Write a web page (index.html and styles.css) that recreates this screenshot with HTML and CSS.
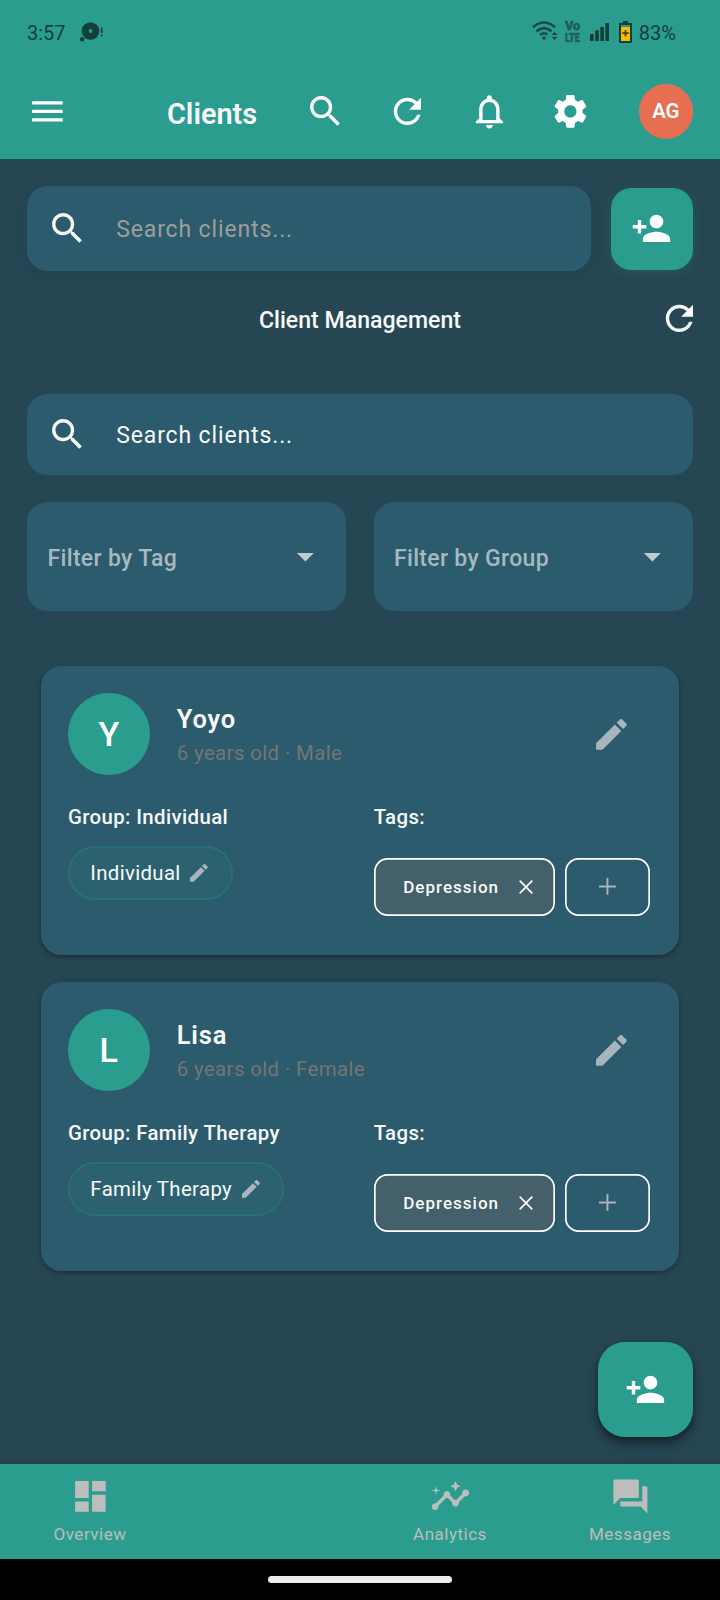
FILE: index.html
```html
<!DOCTYPE html>
<html lang="en">
<head>
<meta charset="utf-8">
<title>Clients</title>
<link rel="stylesheet" href="styles.css">
</head>
<body>
<svg class="defs" aria-hidden="true">
  <symbol id="search" viewBox="0 0 24 24"><path d="M15.5 14h-.79l-.28-.27C15.41 12.59 16 11.11 16 9.5 16 5.91 13.09 3 9.5 3S3 5.91 3 9.5 5.91 16 9.5 16c1.61 0 3.09-.59 4.23-1.57l.27.28v.79l5 4.99L20.49 19l-4.99-5zm-6 0C7.01 14 5 11.99 5 9.5S7.01 5 9.5 5 14 7.01 14 9.5 11.99 14 9.5 14z"/></symbol>
  <symbol id="refresh" viewBox="0 0 24 24"><path d="M17.65 6.35C16.2 4.9 14.21 4 12 4c-4.42 0-7.99 3.58-7.99 8s3.57 8 7.99 8c3.73 0 6.84-2.55 7.73-6h-2.08c-.82 2.33-3.04 4-5.65 4-3.31 0-6-2.69-6-6s2.69-6 6-6c1.66 0 3.14.69 4.22 1.78L13 11h7V4l-2.35 2.35z"/></symbol>
  <symbol id="person-add" viewBox="0 0 24 24"><path d="M15 12c2.21 0 4-1.79 4-4s-1.79-4-4-4-4 1.79-4 4 1.79 4 4 4zm-9-2V7H4v3H1v2h3v3h2v-3h3v-2H6zm9 4c-2.67 0-8 1.34-8 4v2h16v-2c0-2.66-5.33-4-8-4z"/></symbol>
  <symbol id="edit" viewBox="0 0 24 24"><path d="M3 17.25V21h3.75L17.81 9.94l-3.75-3.75L3 17.25zM20.71 7.04c.39-.39.39-1.02 0-1.41l-2.34-2.34c-.39-.39-1.02-.39-1.41 0l-1.83 1.83 3.75 3.75 1.83-1.83z"/></symbol>
  <symbol id="caret" viewBox="0 0 24 24"><path d="M7 10l5 5 5-5z"/></symbol>
  <symbol id="plus" viewBox="0 0 24 24"><path d="M19 12.800h-6.200v6.200h-1.600v-6.200H5v-1.600h6.200V5h1.600v6.200H19z"/></symbol>
</svg>
<div class="screen">
  <header class="header">
    <div class="status">
      <span class="time">3:57</span>
      <svg class="notif" viewBox="0 0 24 20"><circle cx="10.5" cy="9" r="8.8"/><circle cx="2.2" cy="17.2" r="2.2"/><circle class="dot" cx="10.5" cy="9" r="1.9"/><path d="M20.900 5.500h1.600v5.600h-1.600zM20.900 12.600h1.600v1.600h-1.600z"/></svg>
      <svg class="wifi" viewBox="0 0 26 20"><g fill="none" stroke="#174c47" stroke-width="2.600"><path d="M1 6.300Q12 -3.300 23 6.300"/><path d="M4.400 10.300Q12 3.900 19.600 10.300"/><path d="M8 14Q12 10.800 15.500 13.500"/></g><circle cx="12" cy="17" r="1.700"/><path d="M22.500 10.800l2.900 3.200h-5.800zM19.600 15.700h5.800l-2.900 3.200z"/></svg>
      <span class="volte"><span class="vo">Vo</span><span class="lte">LTE</span></span>
      <svg class="signal" viewBox="0 0 19 18"><rect y="11" width="3.600" height="7" rx=".6"/><rect x="5.200" y="7.200" width="3.600" height="10.800" rx=".6"/><rect x="10.300" y="4" width="3.600" height="14" rx=".6"/><rect x="15.400" y="0" width="3.600" height="18" rx=".6"/></svg>
      <svg class="battery" viewBox="0 0 13 22"><path d="M4 0h5v2h4v18.500q0 1.500-1.500 1.500h-10Q0 22 0 20.500V2h4z"/><path fill="#2a9d8f" d="M2 4h9v2H2z"/><path fill="#fbb900" d="M2 6h9v14H2z"/><path fill="#4d4712" d="M5.600 9h1.800v2.200h2.400v1.800H7.400v2.300H5.600V13H3.200v-1.800h2.400z"/></svg>
      <span class="percent">83%</span>
    </div>
    <div class="appbar">
      <button class="icon-btn"><svg class="icon" viewBox="0 0 24 24"><path d="M3 18h18v-2H3v2zm0-5h18v-2H3v2zm0-7v2h18V6H3z"/></svg></button>
      <h1 class="title">Clients</h1>
      <button class="icon-btn"><svg class="icon"><use href="#search"/></svg></button>
      <button class="icon-btn"><svg class="icon"><use href="#refresh"/></svg></button>
      <button class="icon-btn"><svg class="icon" viewBox="0 0 24 24"><path d="M12 22c1.100 0 2-.9 2-2h-4c0 1.100.9 2 2 2zm6-6v-5c0-3.070-1.630-5.640-4.500-6.320V4c0-.83-.67-1.500-1.500-1.500s-1.500.67-1.500 1.500v.68C7.640 5.360 6 7.920 6 11v5l-2 2v1h16v-1l-2-2zm-2 1H8v-6c0-2.480 1.510-4.500 4-4.500s4 2.020 4 4.500v6z"/></svg></button>
      <button class="icon-btn"><svg class="icon" viewBox="0 0 24 24"><path d="M19.140 12.940c.04-.3.060-.61.060-.94 0-.32-.02-.64-.07-.94l2.030-1.580c.18-.14.230-.41.120-.61l-1.920-3.320c-.12-.22-.37-.29-.59-.22l-2.390.96c-.5-.38-1.030-.7-1.620-.94l-.36-2.540c-.04-.24-.24-.41-.48-.41h-3.840c-.24 0-.43.170-.47.410l-.36 2.540c-.59.240-1.130.570-1.620.940l-2.390-.96c-.22-.08-.47 0-.59.220L2.740 8.870c-.12.210-.08.470.120.610l2.030 1.580c-.05.3-.09.630-.09.940s.02.640.070.940l-2.030 1.580c-.18.140-.23.410-.12.610l1.920 3.320c.12.220.37.290.59.220l2.390-.96c.5.380 1.030.7 1.620.940l.36 2.540c.05.240.24.410.48.410h3.840c.24 0 .44-.17.470-.41l.36-2.540c.59-.24 1.130-.56 1.620-.94l2.390.96c.22.080.47 0 .59-.22l1.920-3.320c.12-.22.070-.47-.12-.61l-2.010-1.580zM12 15.600c-1.980 0-3.600-1.620-3.600-3.600s1.620-3.600 3.600-3.600 3.600 1.620 3.600 3.600-1.620 3.600-3.600 3.600z"/></svg></button>
      <span class="account">AG</span>
    </div>
  </header>

  <main class="main">
    <div class="top-row">
      <div class="field field-top"><svg class="icon"><use href="#search"/></svg><span class="placeholder muted">Search clients...</span></div>
      <button class="add"><svg class="icon"><use href="#person-add"/></svg></button>
    </div>
    <div class="heading-row">
      <h2 class="heading">Client Management</h2>
      <svg class="icon"><use href="#refresh"/></svg>
    </div>
    <div class="field"><svg class="icon"><use href="#search"/></svg><span class="placeholder">Search clients...</span></div>
    <div class="filters">
      <div class="filter"><span class="filter-text">Filter by Tag</span><svg class="icon"><use href="#caret"/></svg></div>
      <div class="filter"><span class="filter-text">Filter by Group</span><svg class="icon"><use href="#caret"/></svg></div>
    </div>

    <section class="cards">
      <article class="card">
        <div class="person">
          <span class="avatar">Y</span>
          <div class="who"><h3 class="name">Yoyo</h3><p class="meta">6 years old · Male</p></div>
          <svg class="icon pencil"><use href="#edit"/></svg>
        </div>
        <div class="details">
          <div class="col"><p class="label">Group: Individual</p><span class="pill">Individual<svg class="icon-s"><use href="#edit"/></svg></span></div>
          <div class="col"><p class="label">Tags:</p>
            <div class="tags"><span class="tag">Depression<svg class="close" viewBox="0 0 14 14"><path d="M.7.7l12.600 12.600M13.300.7L.7 13.300"/></svg></span><span class="tag-add"><svg class="icon-m"><use href="#plus"/></svg></span></div>
          </div>
        </div>
      </article>
      <article class="card">
        <div class="person">
          <span class="avatar">L</span>
          <div class="who"><h3 class="name">Lisa</h3><p class="meta">6 years old · Female</p></div>
          <svg class="icon pencil"><use href="#edit"/></svg>
        </div>
        <div class="details">
          <div class="col"><p class="label">Group: Family Therapy</p><span class="pill">Family Therapy<svg class="icon-s"><use href="#edit"/></svg></span></div>
          <div class="col"><p class="label">Tags:</p>
            <div class="tags"><span class="tag">Depression<svg class="close" viewBox="0 0 14 14"><path d="M.7.7l12.600 12.600M13.300.7L.7 13.300"/></svg></span><span class="tag-add"><svg class="icon-m"><use href="#plus"/></svg></span></div>
          </div>
        </div>
      </article>
    </section>
    <button class="fab"><svg class="icon"><use href="#person-add"/></svg></button>
  </main>

  <nav class="nav">
    <a class="nav-item"><svg class="icon" viewBox="0 0 24 24"><path d="M3 13h8V3H3v10zm0 8h8v-6H3v6zm10 0h8V11h-8v10zm0-18v6h8V3h-8z"/></svg><span>Overview</span></a>
    <span></span>
    <a class="nav-item"><svg class="icon" viewBox="0 0 24 24"><path d="M21 8c-1.450 0-2.260 1.440-1.930 2.510l-3.550 3.560c-.3-.09-.74-.09-1.040 0l-2.550-2.550C12.270 10.450 11.460 9 10 9c-1.450 0-2.270 1.440-1.930 2.520l-4.560 4.550C2.440 15.740 1 16.550 1 18c0 1.100.9 2 2 2 1.450 0 2.260-1.440 1.930-2.510l4.550-4.560c.3.090.74.090 1.040 0l2.550 2.550C12.730 16.550 13.540 18 15 18c1.450 0 2.270-1.440 1.930-2.520l3.560-3.550c1.070.330 2.510-.48 2.510-1.930 0-1.100-.9-2-2-2z"/><path d="M15 9l.94-2.070L18 6l-2.060-.93L15 3l-.92 2.070L12 6l2.080.93zM3.500 11L4 9l2-.5L4 8l-.5-2L3 8l-2 .5L3 9z"/></svg><span>Analytics</span></a>
    <a class="nav-item"><svg class="icon" viewBox="0 0 24 24"><path d="M21 6h-2v9H6v2c0 .55.450 1 1 1h11l4 4V7c0-.55-.45-1-1-1zm-4 6V3c0-.55-.45-1-1-1H3c-.55 0-1 .45-1 1v14l4-4h10c.55 0 1-.45 1-1z"/></svg><span>Messages</span></a>
  </nav>
  <div class="gesture"><span class="handle"></span></div>
</div>
</body>
</html>
```
FILE: styles.css
```css
* { box-sizing: border-box; margin: 0; padding: 0; }
body { font-family: Roboto, sans-serif; background: #000; color: #f8f9fa; }
button { border: 0; background: none; color: inherit; font: inherit; }
svg { display: block; fill: currentColor; flex: none; }
.defs { position: absolute; width: 0; height: 0; }
.screen { width: 720px; height: 1600px; display: flex; flex-direction: column; background: #264653; overflow: hidden; }
.icon { width: 40.8px; height: 40.8px; }
.icon-m { width: 28.9px; height: 28.9px; }
.icon-s { width: 23.8px; height: 23.8px; }

.header { height: 159px; flex: none; background: #2a9d8f; }
.status { height: 64px; display: flex; align-items: flex-start; padding: 0 44px 0 27px; color: #123f3a; }
.time, .percent { font-size: 20px; line-height: 24px; margin-top: 21px; }
.time { width: 53px; }
.notif { width: 24px; height: 20px; margin-top: 22px; }
.notif .dot { fill: #2a9d8f; }
.wifi { width: 26px; height: 20px; margin-top: 21px; margin-left: auto; color: #174c47; }
.volte { margin: 21px 0 0 7px; width: 17px; height: 22px; display: flex; flex-direction: column; align-items: flex-start; color: #1b5f57; font-size: 12px; font-weight: 800; line-height: 11.500px; -webkit-text-stroke: .6px #1b5f57; }
.vo { transform: scaleX(1.050); transform-origin: left; }
.lte { transform: scaleX(.77); transform-origin: left; }
.signal { width: 19px; height: 18px; margin: 22.500px 0 0 8px; }
.battery { width: 13px; height: 22px; margin: 21px 7px 0 10px; }

.appbar { height: 95px; display: flex; align-items: center; padding: 0 27px 0 6.800px; }
.icon-btn { width: 81.600px; height: 81.600px; flex: none; display: flex; align-items: center; justify-content: center; color: #fff; }
.title { width: 118px; margin-left: 78.600px; padding-top: 4px; flex: none; font-size: 28.900px; line-height: 36px; font-weight: 600; white-space: nowrap; }
.account { width: 54.400px; height: 54.400px; margin-left: auto; border-radius: 50%; background: #e76f51; color: #fff; display: flex; align-items: center; justify-content: center; font-size: 20.400px; font-weight: 600; }

.main { position: relative; flex: 1; padding: 27.400px 27.200px 0; display: flex; flex-direction: column; box-shadow: inset 0 -8px 8px -8px rgba(0, 0, 0, .2); }
.top-row { display: flex; align-items: center; gap: 20.400px; }
.field { height: 81.600px; border-radius: 20.400px; background: #2b5b6c; display: flex; align-items: center; gap: 28.200px; padding-left: 20px; }
.field-top { flex: 1; height: 85px; box-shadow: 0 3px 14px rgba(0, 0, 0, .06); }
.placeholder { padding-top: 3px; font-size: 23px; line-height: 30px; letter-spacing: .87px; }
.placeholder.muted { padding-top: 2px; }
.muted { color: #9e9e9e; }
.add { width: 81.600px; height: 81.600px; border-radius: 20.400px; background: #2a9d8f; color: #fff; display: flex; align-items: center; justify-content: center; padding-right: 1px; box-shadow: 0 3px 14px rgba(42, 157, 143, .2); }
.heading-row { height: 95px; display: grid; grid-template-columns: 40.800px 1fr 40.800px; align-items: center; margin-right: -6.800px; margin-left: -6.800px; }
.heading { grid-column: 2; padding-top: 4px; text-align: center; font-size: 23.100px; line-height: 30px; font-weight: 500; }
.heading-row + .field { margin-top: 27.300px; }
.filters { display: grid; grid-template-columns: 1fr 1fr; gap: 27.200px; margin-top: 27.200px; }
.filter { height: 108.800px; border-radius: 20.400px; background: #2b5b6c; display: flex; align-items: center; justify-content: space-between; padding: 0 20.400px; color: #c0cbd2; }
.filter-text { padding-top: 4px; font-size: 23px; line-height: 30px; font-weight: 500; letter-spacing: .31px; color: #a6b9c1; }

.cards { display: flex; flex-direction: column; gap: 27.200px; margin: 54.700px 13.600px 0; }
.card { height: 288.800px; border-radius: 20.400px; background: #2b5b6c; padding: 27.200px; box-shadow: 0 2px 5px rgba(0, 0, 0, .35); }
.person { height: 81.600px; display: flex; align-items: center; }
.avatar { width: 81.600px; height: 81.600px; border-radius: 50%; background: #2a9d8f; color: #fff; display: flex; align-items: center; justify-content: center; font-size: 34px; font-weight: 500; }
.who { flex: 1; margin-left: 27.200px; padding-top: 4px; }
.name { font-size: 25.500px; line-height: 34px; font-weight: 600; letter-spacing: .8px; }
.meta { padding-top: 1px; font-size: 20.400px; line-height: 32px; letter-spacing: .38px; color: #757575; }
.pencil { margin-right: 20.400px; }
.pencil, .icon-s, .icon-m { color: #aab4be; }
.details { display: grid; grid-template-columns: 305.700px 1fr; margin-top: 27.200px; }
.label { font-size: 20.400px; line-height: 30px; font-weight: 500; letter-spacing: .37px; }
.pill { display: inline-flex; align-items: center; gap: 6.600px; height: 54.400px; margin-top: 14px; padding: 0 21.500px 0 22.400px; border-radius: 27.200px; background: #2c626f; box-shadow: inset 0 0 0 1.700px #2b7179; font-size: 20.400px; letter-spacing: .34px; white-space: nowrap; }
.tags { display: flex; gap: 10.200px; margin-top: 26px; }
.tag, .tag-add { height: 57.800px; border-radius: 13.600px; box-shadow: inset 0 0 0 1.700px #fff; display: flex; align-items: center; }
.tag { width: 181px; padding: 1px 22px 0 29.500px; justify-content: space-between; background: #43606b; font-size: 17px; font-weight: 500; letter-spacing: 1.030px; }
.tag-add { width: 85px; justify-content: center; }
.close { width: 14px; height: 14px; fill: none; stroke: #fff; stroke-width: 1.700; }

.fab { position: absolute; right: 27.200px; bottom: 27.200px; width: 95.200px; height: 95.200px; border-radius: 27.200px; background: #2a9d8f; color: #fff; display: flex; align-items: center; justify-content: center; box-shadow: 0 7px 12px rgba(0, 0, 0, .35), 0 3px 5px rgba(0, 0, 0, .25); }

.nav { height: 95px; flex: none; display: grid; grid-template-columns: repeat(4, 1fr); background: #2a9d8f; color: #bdbdbd; }
.nav-item { display: flex; flex-direction: column; align-items: center; padding-top: 12px; gap: 6px; font-size: 17px; line-height: 22px; letter-spacing: .5px; }
.gesture { height: 41px; flex: none; background: #000; padding-top: 17px; }
.handle { display: block; width: 184px; height: 7px; margin: 0 auto; border-radius: 4px; background: #ececec; }
```
